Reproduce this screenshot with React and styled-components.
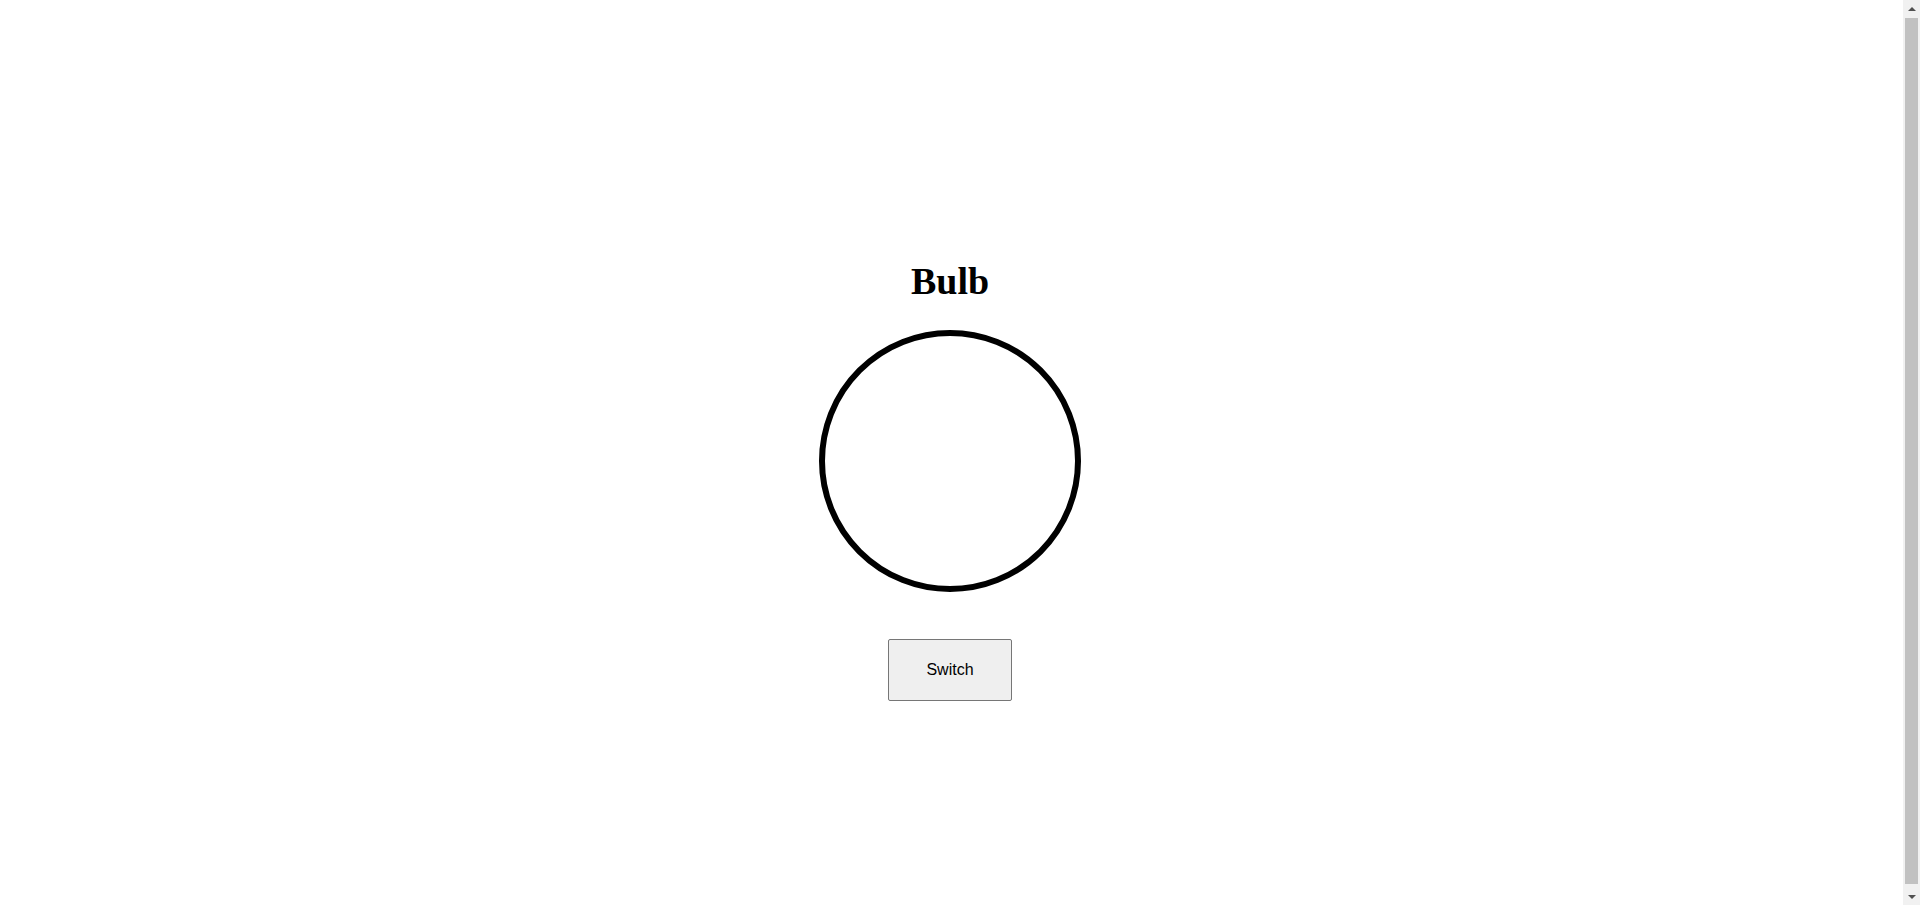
import React, { useState } from "react"
import styled, { createGlobalStyle } from "styled-components"

const GlobalStyle = createGlobalStyle`
  body {
    margin: 8px 28px 8px 8px;
    background: #fff;
    font-family: "Liberation Serif", "Times New Roman", serif;
  }
`

const StyledBulbPage = styled.main`
  display: flex;
  height: 100vh;
  flex-direction: column;
  align-items: center;
  justify-content: center;
`

const Title = styled.h1`
  margin: 38px 0 27px;
  font-family: "Liberation Serif", "Times New Roman", serif;
  font-size: 38px;
  font-weight: bold;
  line-height: 44px;
  color: #000;
`

const Bulb = styled.div`
  width: 250px;
  height: 250px;
  border: 6px solid #000;
  border-radius: 50%;
  background: ${props => (props.$on ? "#ffe066" : "#fff")};
  transition: background 0.3s ease;
`

const SwitchButton = styled.button`
  width: 124px;
  height: 62px;
  margin-top: 47px;
  padding: 0;

  font-family: "Liberation Sans", Arial, sans-serif;
  font-size: 16px;
  color: #000;
  background: #efefef;
  border: 1px solid #767676;
  border-radius: 2px;
  cursor: pointer;
`

// the page overflows by its body margin, so the window shows a scrollbar
const ScrollTrack = styled.div`
  position: fixed;
  top: 0;
  right: 0;
  display: flex;
  width: 17px;
  height: 100vh;
  flex-direction: column;
  align-items: center;
  background: #f1f1f1;
`

const ScrollArrow = styled.div`
  display: flex;
  width: 17px;
  height: 17px;
  align-items: center;
  justify-content: center;

  &::after {
    content: "";
    border-left: 4px solid transparent;
    border-right: 4px solid transparent;
    ${props =>
      props.$down
        ? "border-top: 4px solid #505050;"
        : "border-bottom: 4px solid #505050;"}
  }
`

const ScrollThumb = styled.div`
  flex: 1;
  width: 13px;
  margin: 1px 0 4px;
  background: #c1c1c1;
`

const App = () => {
  const [on, setOn] = useState(false)

  return (
    <>
      <GlobalStyle />
      <StyledBulbPage>
        <Title>Bulb</Title>
        <Bulb $on={on} />
        <SwitchButton onClick={() => setOn(!on)}>Switch</SwitchButton>
      </StyledBulbPage>
      <ScrollTrack>
        <ScrollArrow />
        <ScrollThumb />
        <ScrollArrow $down />
      </ScrollTrack>
    </>
  )
}

export default App
